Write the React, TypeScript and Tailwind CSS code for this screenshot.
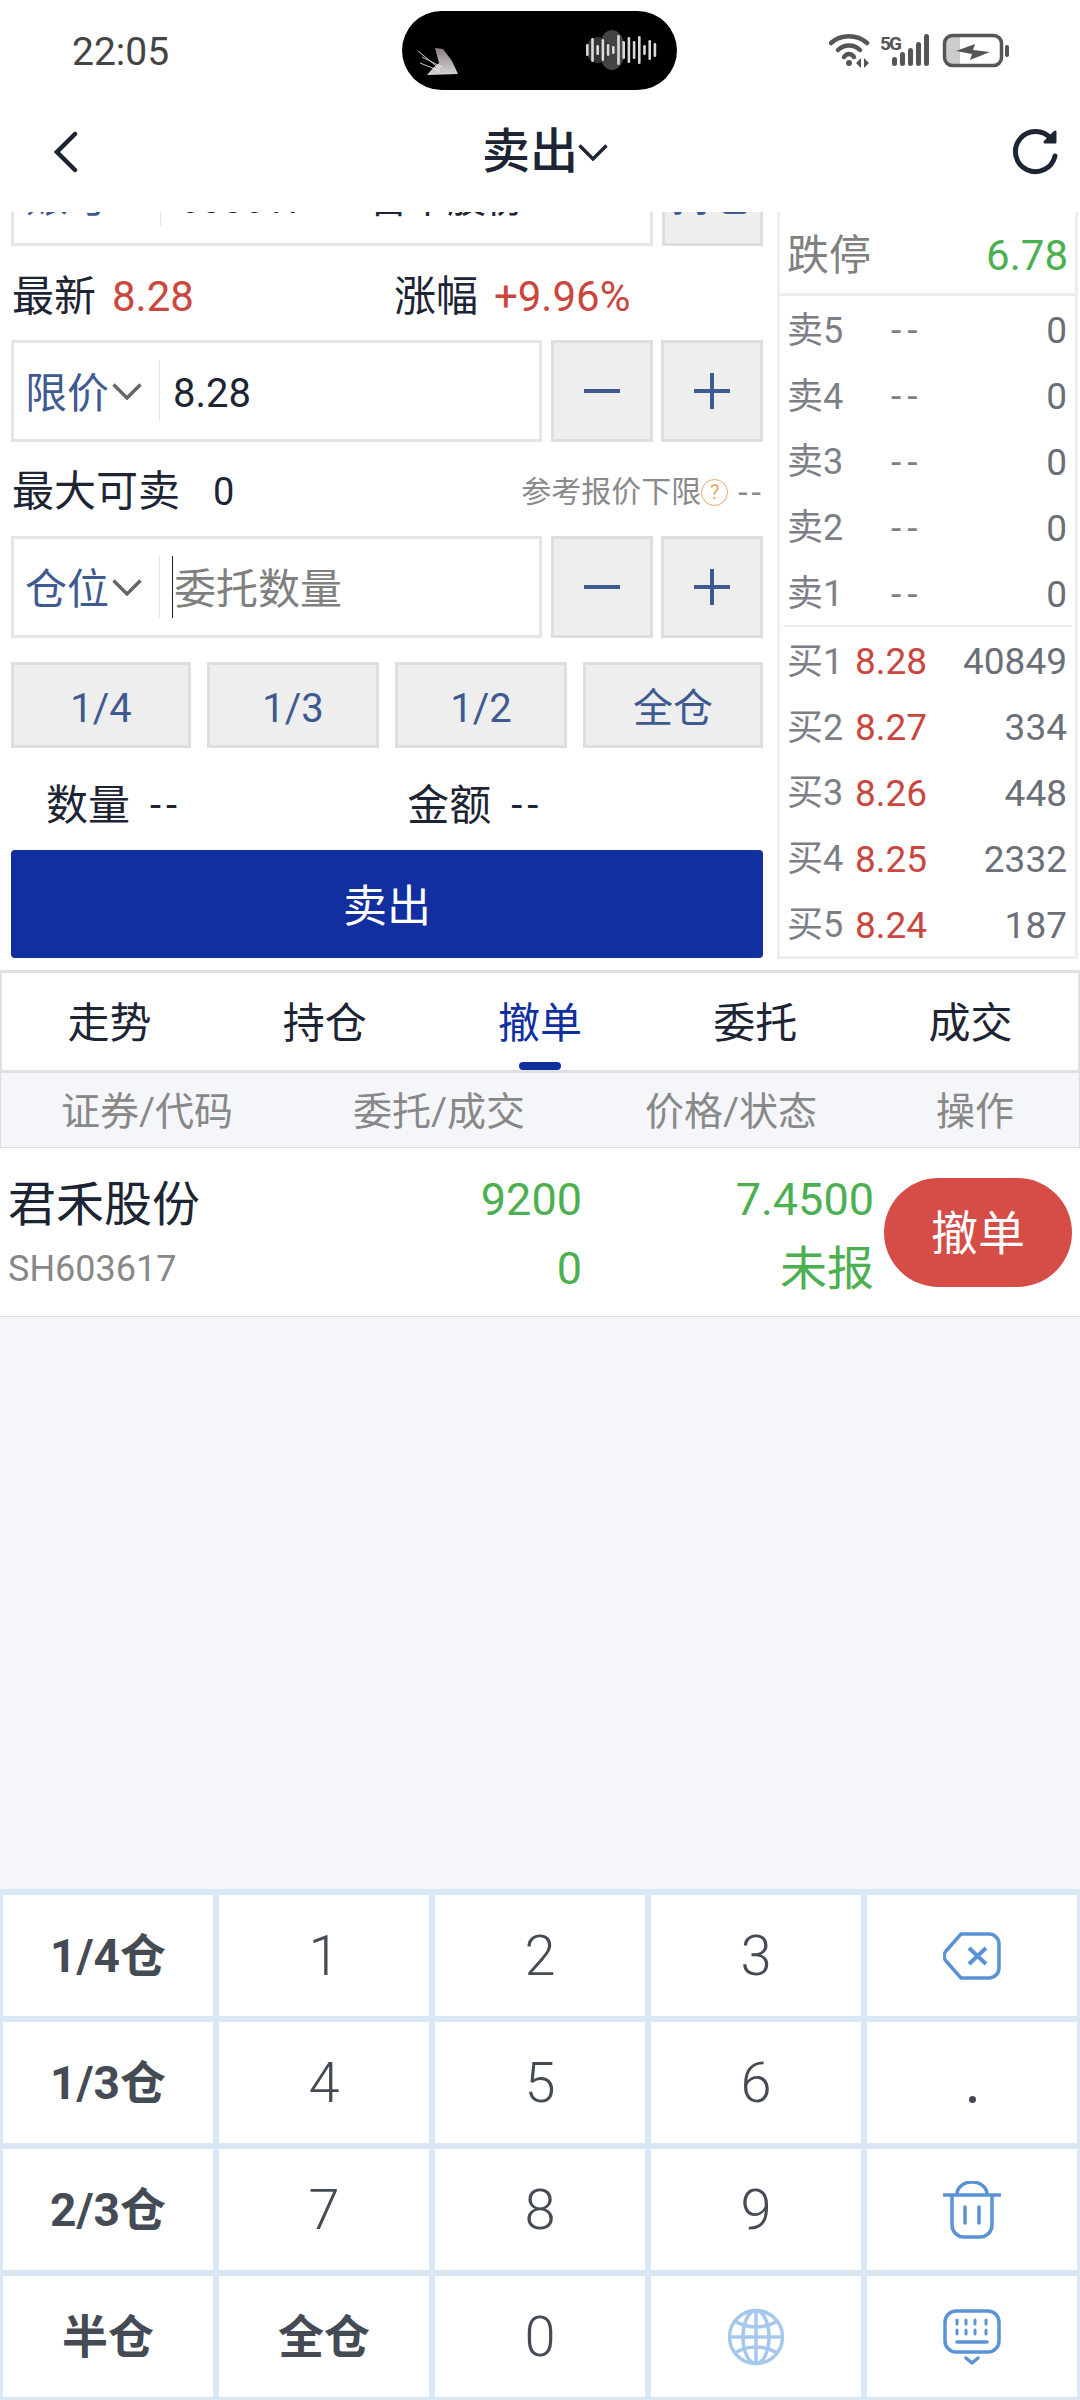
const asks = ['卖5', '卖4', '卖3', '卖2', '卖1'];

const bids = [
  { label: '买1', price: '8.28', vol: '40849' },
  { label: '买2', price: '8.27', vol: '334' },
  { label: '买3', price: '8.26', vol: '448' },
  { label: '买4', price: '8.25', vol: '2332' },
  { label: '买5', price: '8.24', vol: '187' },
];

const waveBars = [12, 24, 10, 22, 12, 8, 30, 18, 26, 18, 28, 10, 20, 14];

/* ===== Status bar ===== */
function StatusIcons() {
  return (
    <svg width="184" height="36" viewBox="0 0 184 36" fill="none">
      {/* wifi */}
      <g stroke="#555" strokeWidth="4.5" strokeLinecap="round">
        <path d="M2 10 C12 1 28 1 38 10" />
        <path d="M9 17 C15 11 25 11 31 17" />
        <path d="M15 24 C18 20 22 20 25 24" />
      </g>
      <circle cx="20" cy="30" r="3" fill="#555" />
      <path d="M32 25 v10 l-5 -5 Z M35 25 v10 l5 -5 Z" fill="#555" />
      {/* 5G + bars */}
      <text x="51" y="17" fontSize="19" fontWeight="700" fill="#555" fontFamily="Roboto, sans-serif" textLength="22">
        5G
      </text>
      <g fill="#555">
        <rect x="63" y="24" width="5" height="9" rx="2.5" />
        <rect x="71" y="19" width="5" height="14" rx="2.5" />
        <rect x="79" y="15" width="5" height="18" rx="2.5" />
        <rect x="87" y="9" width="5" height="24" rx="2.5" />
        <rect x="95" y="1" width="5" height="32" rx="2.5" />
      </g>
      {/* battery */}
      <path d="M117 4 h14 v27 h-14 Z" fill="#ccc" />
      <rect x="115.5" y="2.5" width="57" height="30" rx="8" stroke="#555" strokeWidth="3.5" />
      <path d="M127 18 L146 11 L144 17 L161 19 L141 27 L143 21 Z" fill="#555" />
      <rect x="176" y="12" width="4" height="12" rx="2" fill="#555" />
    </svg>
  );
}

function Island() {
  return (
    <div className="absolute left-[402px] top-[11px] h-[79px] w-[275px] rounded-[40px] bg-black">
      <svg width="275" height="79" viewBox="0 0 275 79" className="block">
        <defs>
          <linearGradient id="bird" x1="0" y1="0" x2="0" y2="1">
            <stop offset="0" stopColor="#8a7f80" />
            <stop offset="1" stopColor="#d8d4d4" />
          </linearGradient>
        </defs>
        <path d="M33 37 L41 38 L50 50 L56 63 L25 64 L31 57 L37 52 Z" fill="url(#bird)" />
        <path d="M16 40 L38 58 M20 46 L40 56 M18 52 L38 60" stroke="#fff" strokeWidth="1" opacity="0.8" />
        <ellipse cx="210" cy="39" rx="13" ry="20" fill="#444" />
        <ellipse cx="196" cy="39" rx="12" ry="13" fill="#333" />
        {waveBars.map((h, i) => (
          <rect key={i} x={184 + i * 5.2} y={39 - h / 2} width="2.6" height={h} rx="1.3" fill="#d9d9d9" />
        ))}
      </svg>
    </div>
  );
}

/* ===== Shared order form bits ===== */
function Caret({ color }: { color: string }) {
  return (
    <svg width="30" height="17" viewBox="0 0 30 17" fill="none" stroke={color} strokeWidth="3.4">
      <path d="M1.5 1.5 L15 15 L28.5 1.5" />
    </svg>
  );
}

function StepButton({ sign }: { sign: 'minus' | 'plus' }) {
  return (
    <div className="flex h-[102px] w-[102px] items-center justify-center border-[3px] border-[#dedede] bg-[#eeeeee]">
      <svg width="36" height="36" viewBox="0 0 36 36">
        <rect x="0" y="16" width="36" height="4" fill="#3f5a91" />
        {sign === 'plus' && <rect x="16" y="0" width="4" height="36" fill="#3f5a91" />}
      </svg>
    </div>
  );
}

function InputBox({ label, children }: { label: string; children: React.ReactNode }) {
  return (
    <div className="flex h-[102px] w-[531px] items-center border-[3px] border-[#e5e5e5] bg-white">
      <span className="ml-[11px] pt-[5px] text-[42px] leading-none text-[#3f5a91]">{label}</span>
      <span className="ml-[3px]">
        <Caret color="#666666" />
      </span>
      <div className="ml-[17px] h-[62px] w-px bg-[#e5e5e5]" />
      {children}
    </div>
  );
}

function RatioButton({ text, width }: { text: string; width: string }) {
  return (
    <div
      className={`flex h-[86px] items-center justify-center border-[3px] border-[#dedede] bg-[#eeeeee] pt-[8px] text-[40px] leading-none text-[#3f5a91] ${width}`}
    >
      {text}
    </div>
  );
}

/* ===== Left form ===== */
function OrderForm() {
  return (
    <div className="w-[766px] pl-[11px]">
      {/* row scrolled under the header */}
      <div className="flex h-[34px] flex-col justify-end overflow-hidden">
        <div className="flex shrink-0 gap-[9px]">
          <div className="flex h-[102px] w-[642px] items-center border-[3px] border-[#e5e5e5] bg-white">
            <span className="ml-[12px] w-[134px] pt-[5px] text-[42px] leading-none text-[#3f5a91]">账号</span>
            <div className="h-[62px] w-px bg-[#e5e5e5]" />
            <span className="ml-[18px] w-[190px] pt-[9px] text-[38px] leading-none text-[#1d2433]">600617</span>
            <span className="pt-[9px] text-[39px] leading-none text-[#1d2433]">吉华股份</span>
          </div>
          <div className="flex h-[102px] w-[101px] items-center justify-center border-[3px] border-[#dedede] bg-[#eeeeee] pt-[5px] text-[41px] leading-none text-[#3f5a91]">
            持仓
          </div>
        </div>
      </div>

      <div className="flex h-[94px] items-center pt-[8px] text-[42px] leading-none">
        <span className="ml-px text-[#1d2433]">最新</span>
        <span className="ml-[16px] text-[#c9473f]">8.28</span>
        <span className="ml-[200px] text-[#1d2433]">涨幅</span>
        <span className="ml-[16px] text-[#c9473f]">+9.96%</span>
      </div>

      <div className="flex gap-[9px]">
        <InputBox label="限价">
          <span className="ml-[13px] pt-[5px] text-[40px] leading-none text-[#1d2433]">8.28</span>
        </InputBox>
        <StepButton sign="minus" />
        <div className="-ml-px">
          <StepButton sign="plus" />
        </div>
      </div>

      <div className="flex h-[94px] items-center pt-[6px] pr-px">
        <span className="ml-px text-[42px] leading-none text-[#1d2433]">最大可卖</span>
        <span className="ml-[33px] text-[38px] leading-none text-[#1d2433]">0</span>
        <span className="ml-auto text-[30px] leading-none text-[#8a8a8a]">参考报价下限</span>
        <span className="flex h-[27px] w-[27px] items-center justify-center rounded-full border border-[#e8a866] text-[20px] leading-none text-[#e8a866]">
          ?
        </span>
        <span className="ml-[10px] text-[34px] leading-none tracking-[4px] text-[#8a8a8a]">--</span>
      </div>

      <div className="flex gap-[9px]">
        <InputBox label="仓位">
          <div className="ml-[12px] h-[62px] w-px bg-[#222]" />
          <span className="ml-px pt-[5px] text-[42px] leading-none text-[#808080]">委托数量</span>
        </InputBox>
        <StepButton sign="minus" />
        <div className="-ml-px">
          <StepButton sign="plus" />
        </div>
      </div>

      <div className="mt-[24px] flex gap-[16px]">
        <RatioButton text="1/4" width="w-[180px]" />
        <RatioButton text="1/3" width="w-[172px]" />
        <RatioButton text="1/2" width="w-[172px]" />
        <RatioButton text="全仓" width="w-[180px]" />
      </div>

      <div className="flex h-[102px] items-center pt-[14px] text-[42px] leading-none text-[#1d2433]">
        <span className="ml-[35px]">数量</span>
        <span className="ml-[20px] text-[40px] tracking-[5px]">--</span>
        <span className="ml-[225px]">金额</span>
        <span className="ml-[20px] text-[40px] tracking-[5px]">--</span>
      </div>

      <div className="flex h-[108px] w-[752px] items-center justify-center rounded-[4px] bg-[#112f9e] pt-[5px] text-[44px] leading-none text-white">
        卖出
      </div>
    </div>
  );
}

/* ===== Right order book ===== */
function BookRow({ label, price, vol, isBid }: { label: string; price: string; vol: string; isBid?: boolean }) {
  return (
    <div className="flex h-[66px] items-center pl-[7px] pr-[8px] pt-[4px] text-[37px] leading-none">
      <span className="w-[68px] text-[36px] text-[#7c7f86]">{label}</span>
      <span className={isBid ? 'w-[100px] text-[#c9473f]' : 'w-[100px] pl-[36px] tracking-[6px] text-[#7c7f86]'}>
        {price}
      </span>
      <span className="ml-auto text-[#6b6f78]">{vol}</span>
    </div>
  );
}

function OrderBook() {
  return (
    <div className="ml-[11px] flex h-[747px] w-[301px] flex-col border-x-[3px] border-b-[3px] border-[#eeeeee]">
      <div className="flex h-[84px] shrink-0 items-center justify-between border-b-[3px] border-[#eeeeee] px-[7px] pt-[6px]">
        <span className="text-[42px] leading-none text-[#808080]">跌停</span>
        <span className="text-[42px] leading-none text-[#4caf50]">6.78</span>
      </div>
      {asks.map((label) => (
        <BookRow key={label} label={label} price="--" vol="0" />
      ))}
      <div className="mx-[3px] h-[2px] shrink-0 bg-[#eeeeee]" />
      {bids.map((row) => (
        <BookRow key={row.label} label={row.label} price={row.price} vol={row.vol} isBid />
      ))}
    </div>
  );
}

/* ===== Tabs + orders ===== */
function OrderTabs() {
  return (
    <div className="mt-[11px] flex h-[103px] border-x-2 border-y-[3px] border-[#e0e0e0] bg-white">
      {['走势', '持仓', '撤单', '委托', '成交'].map((tab) => (
        <div key={tab} className="relative flex flex-1 items-center justify-center pt-[4px] text-[42px] leading-none">
          <span className={tab === '撤单' ? 'text-[#112f9e]' : 'text-[#1d2433]'}>{tab}</span>
          {tab === '撤单' && (
            <span className="absolute bottom-0 left-1/2 h-[8px] w-[42px] -translate-x-1/2 rounded-full bg-[#112f9e]" />
          )}
        </div>
      ))}
    </div>
  );
}

function OrderHeader() {
  return (
    <div className="flex h-[75px] items-center border-x border-b border-[#dddddd] bg-[#f4f6fa] pt-[4px] text-[39px] leading-none text-[#888888]">
      <span className="w-[292px] text-center">证券/代码</span>
      <span className="w-[292px] text-center">委托/成交</span>
      <span className="w-[292px] text-center">价格/状态</span>
      <span className="flex-1 pr-[6px] text-center">操作</span>
    </div>
  );
}

function OrderRow() {
  return (
    <div className="flex h-[169px] items-center border-b border-[#dddddd] bg-white pt-[4px]">
      <div className="ml-[8px] flex w-[250px] flex-col">
        <span className="text-[48px] leading-none text-[#1d2433]">君禾股份</span>
        <span className="mt-[22px] text-[36px] leading-none text-[#888888]">SH603617</span>
      </div>
      <div className="flex w-[324px] flex-col items-end text-[45px] leading-none text-[#4caf50]">
        <span>9200</span>
        <span className="mt-[24px]">0</span>
      </div>
      <div className="flex w-[292px] flex-col items-end text-[45px] leading-none text-[#4caf50]">
        <span>7.4500</span>
        <span className="mt-[23px] text-[47px]">未报</span>
      </div>
      <div className="ml-[10px] flex h-[109px] w-[188px] -translate-y-[2px] items-center justify-center rounded-full bg-[#d64c47] pt-[3px] text-[47px] leading-none text-white">
        撤单
      </div>
    </div>
  );
}

/* ===== Keyboard icons ===== */
function BackspaceIcon() {
  return (
    <svg width="58" height="48" viewBox="0 0 58 48" fill="none" stroke="#5a92d6" strokeWidth="3.5">
      <path d="M18 2 H46 A10 10 0 0 1 56 12 V36 A10 10 0 0 1 46 46 H18 L3 29 A8 8 0 0 1 3 19 Z" />
      <path d="M26 16 L43 32 M43 16 L26 32" strokeWidth="4" />
    </svg>
  );
}

function TrashIcon() {
  return (
    <svg width="58" height="58" viewBox="0 0 58 58" fill="none" stroke="#5a92d6" strokeWidth="3.5">
      <path d="M1 14 H57" strokeLinecap="round" />
      <path d="M14 13 A15 12 0 0 1 44 13" />
      <path d="M9 14 V44 A12 12 0 0 0 21 56 H37 A12 12 0 0 0 49 44 V14" />
      <path d="M22 26 V42 M36 26 V42" strokeLinecap="round" />
    </svg>
  );
}

function GlobeIcon() {
  return (
    <svg width="58" height="58" viewBox="0 0 58 58" fill="none" stroke="#a6c8ec" strokeWidth="3.5">
      <circle cx="29" cy="29" r="26.5" />
      <ellipse cx="29" cy="29" rx="13" ry="26.5" />
      <path d="M29 2 V56 M3 29 H55 M8 13 C20 21 38 21 50 13 M8 45 C20 37 38 37 50 45" />
    </svg>
  );
}

function KeyboardIcon() {
  return (
    <svg width="58" height="56" viewBox="0 0 58 56" fill="none" stroke="#5a92d6" strokeWidth="3.5">
      <rect x="2" y="2" width="54" height="41" rx="11" />
      <path
        d="M14 11 v4 M23 11 v4 M32 11 v4 M43 11 v4 M14 21 v4 M23 21 v4 M32 21 v4 M43 21 v4"
        strokeWidth="3"
        strokeLinecap="round"
      />
      <path d="M14 33 H44" strokeLinecap="round" />
      <path d="M23 49 L29 54 L35 49" strokeLinecap="round" strokeLinejoin="round" />
    </svg>
  );
}

function Key({ children, bold }: { children: React.ReactNode; bold?: boolean }) {
  return (
    <div
      className={[
        'flex items-center justify-center bg-white leading-none text-[#444b55]',
        bold ? 'text-[46px] font-bold' : 'text-[56px] font-light',
      ].join(' ')}
    >
      {children}
    </div>
  );
}

function Keyboard() {
  return (
    <div className="grid h-[511px] grid-cols-5 grid-rows-4 gap-[6px] bg-[#dae7f5] px-[3px] pb-[3px] pt-[6px]">
      <Key bold>1/4仓</Key>
      <Key>1</Key>
      <Key>2</Key>
      <Key>3</Key>
      <Key>
        <BackspaceIcon />
      </Key>
      <Key bold>1/3仓</Key>
      <Key>4</Key>
      <Key>5</Key>
      <Key>6</Key>
      <Key>
        <span className="mt-[34px] h-[7px] w-[7px] rounded-full bg-[#444b55]" />
      </Key>
      <Key bold>2/3仓</Key>
      <Key>7</Key>
      <Key>8</Key>
      <Key>9</Key>
      <Key>
        <TrashIcon />
      </Key>
      <Key bold>半仓</Key>
      <Key bold>全仓</Key>
      <Key>0</Key>
      <Key>
        <GlobeIcon />
      </Key>
      <Key>
        <KeyboardIcon />
      </Key>
    </div>
  );
}

/* ===== Main Export ===== */
export default function App() {
  return (
    <div className="relative flex h-[2400px] w-[1080px] flex-col overflow-hidden bg-white [font-family:Roboto,'Noto_Sans_CJK_SC',sans-serif]">
      {/* Status bar */}
      <div className="flex h-[100px] shrink-0 justify-between pl-[72px] pr-[67px] pt-[33px]">
        <span className="text-[39px] leading-none text-[#444444]">22:05</span>
        <StatusIcons />
      </div>
      <Island />

      {/* Header */}
      <div className="flex h-[112px] shrink-0 items-center justify-between pb-[8px] pl-[54px] pr-[20px]">
        <svg width="24" height="42" viewBox="0 0 24 42" fill="none" stroke="#1d2433" strokeWidth="4.5" strokeLinecap="round">
          <path d="M21 3 L3 21 L21 39" />
        </svg>
        <div className="flex items-center">
          <span className="text-[48px] font-medium leading-none text-[#1d2433]">卖出</span>
          <Caret color="#1d2433" />
        </div>
        <svg width="48" height="48" viewBox="0 0 48 48" fill="none" stroke="#1d2433" strokeWidth="5" strokeLinecap="round">
          <path d="M39 11 A20 20 0 1 0 43 28" />
          <path d="M43 4 V14 H33 Z" strokeWidth="3" fill="#1d2433" strokeLinejoin="round" />
        </svg>
      </div>

      {/* Order form + book */}
      <div className="flex shrink-0">
        <OrderForm />
        <OrderBook />
      </div>

      <OrderTabs />
      <OrderHeader />
      <OrderRow />

      <div className="flex-1 bg-[#f4f6fa]" />
      <Keyboard />
    </div>
  );
}
